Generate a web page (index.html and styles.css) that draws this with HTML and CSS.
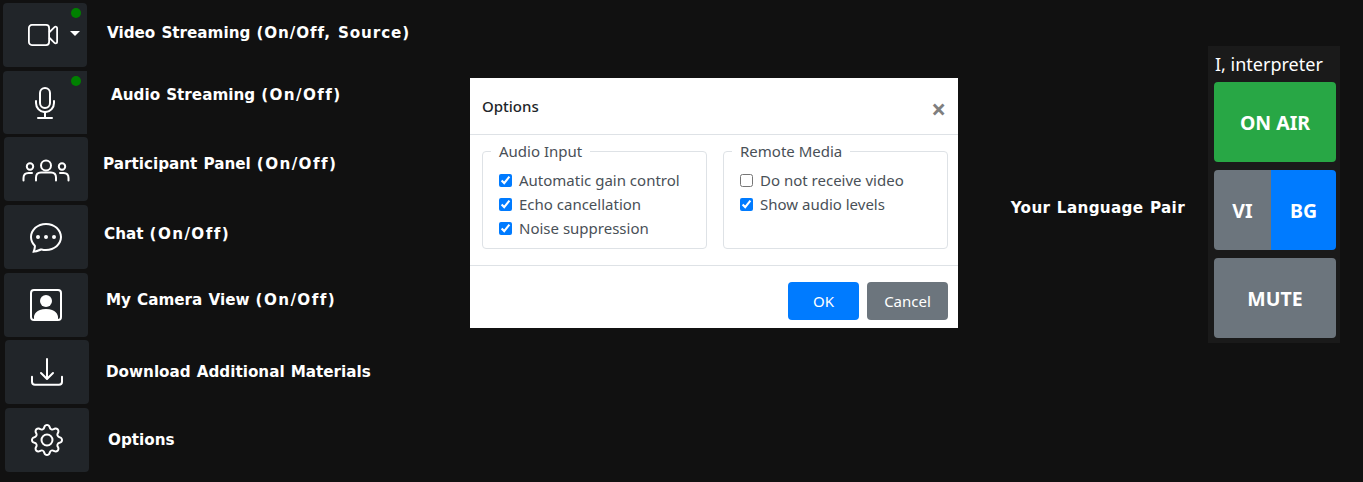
FILE: index.html
```html
<!DOCTYPE html>
<html>
	<head>
		<meta charset="utf-8"/>
		<title>Interpreter</title>
		<link rel="stylesheet" href="styles.css">
	</head>
	<body>
		<div class="toolbar">
			<div class="row row1">
				<div class="tool">
					<svg class="icon-cam" viewBox="0 0 30 22" fill="none" stroke="#fff" stroke-width="1.8"><rect x="0.9" y="0.9" width="20.2" height="20.2" rx="3"/><path d="M21.100 8.500l5.400-5.300c1-.9 2.600-.5 2.600.9v13.800c0 1.400-1.600 1.800-2.600.9l-5.400-5.300"/></svg>
					<span class="caret"></span>
					<span class="dot"></span>
				</div>
				<span class="label">Video Streaming <span class="paren-long">(On/Off, Source)</span></span>
			</div>
			<div class="row row2">
				<div class="tool square-right">
					<svg class="icon" viewBox="0 0 16 16" fill="#fff"><path d="M3.5 6.5A.5.5 0 0 1 4 7v1a4 4 0 0 0 8 0V7a.5.5 0 0 1 1 0v1a5 5 0 0 1-4.5 4.975V15h3a.5.5 0 0 1 0 1h-7a.5.5 0 0 1 0-1h3v-2.025A5 5 0 0 1 3 8V7a.5.5 0 0 1 .5-.5z"/><path d="M10 8a2 2 0 1 1-4 0V3a2 2 0 1 1 4 0v5zM8 0a3 3 0 0 0-3 3v5a3 3 0 0 0 6 0V3a3 3 0 0 0-3-3z"/></svg>
					<span class="dot"></span>
				</div>
				<span class="label">Audio Streaming <span class="paren">(On/Off)</span></span>
			</div>
			<div class="row row3">
				<div class="tool">
					<svg class="icon-people" viewBox="0 0 48 24" fill="none" stroke="#fff" stroke-width="2" stroke-linecap="round"><circle cx="24" cy="7.500" r="5"/><circle cx="8" cy="8.500" r="3.200"/><circle cx="40" cy="8.500" r="3.200"/><path d="M14 22.500v-3c0-3 2-5 5-5h10c3 0 5 2 5 5v3"/><path d="M1.500 22.500v-2.500c0-3 2-5 5-5h3.500"/><path d="M46.500 22.500v-2.500c0-3-2-5-5-5h-3.500"/></svg>
				</div>
				<span class="label">Participant Panel <span class="paren">(On/Off)</span></span>
			</div>
			<div class="row row4">
				<div class="tool">
					<svg class="icon" viewBox="0 0 16 16" fill="#fff"><path d="M5 8a1 1 0 1 1-2 0 1 1 0 0 1 2 0zm4 0a1 1 0 1 1-2 0 1 1 0 0 1 2 0zm3 1a1 1 0 1 0 0-2 1 1 0 0 0 0 2z"/><path d="m2.165 15.803.02-.004c1.83-.363 2.948-.842 3.468-1.105A9.06 9.06 0 0 0 8 15c4.418 0 8-3.134 8-7s-3.582-7-8-7-8 3.134-8 7c0 1.760.743 3.370 1.970 4.600a10.437 10.437 0 0 1-.524 2.318l-.003.011a10.722 10.722 0 0 1-.244.637c-.079.186.074.394.273.362a21.673 21.673 0 0 0 .693-.125zm.8-3.108a1 1 0 0 0-.287-.801C1.618 10.830 1 9.468 1 8c0-3.192 3.004-6 7-6s7 2.808 7 6c0 3.193-3.004 6-7 6a8.060 8.060 0 0 1-2.088-.272 1 1 0 0 0-.711.074c-.387.196-1.240.570-2.634.893a10.970 10.970 0 0 0 .398-2z"/></svg>
				</div>
				<span class="label">Chat <span class="paren">(On/Off)</span></span>
			</div>
			<div class="row row5">
				<div class="tool">
					<svg class="icon" viewBox="0 0 16 16" fill="#fff"><path d="M11 6a3 3 0 1 1-6 0 3 3 0 0 1 6 0z"/><path d="M2 0a2 2 0 0 0-2 2v12a2 2 0 0 0 2 2h12a2 2 0 0 0 2-2V2a2 2 0 0 0-2-2H2zm12 1a1 1 0 0 1 1 1v12a1 1 0 0 1-1 1v-1c0-1-1-4-6-4s-6 3-6 4v1a1 1 0 0 1-1-1V2a1 1 0 0 1 1-1h12z"/></svg>
				</div>
				<span class="label">My Camera View <span class="paren">(On/Off)</span></span>
			</div>
			<div class="row row6">
				<div class="tool">
					<svg class="icon" viewBox="0 0 16 16" fill="#fff"><path d="M.5 9.900a.5.5 0 0 1 .5.500v2.500a1 1 0 0 0 1 1h12a1 1 0 0 0 1-1v-2.500a.5.5 0 0 1 1 0v2.500a2 2 0 0 1-2 2H2a2 2 0 0 1-2-2v-2.500a.5.5 0 0 1 .5-.500z"/><path d="M7.646 11.854a.5.5 0 0 0 .708 0l3-3a.5.5 0 0 0-.708-.708L8.500 10.293V1.500a.5.5 0 0 0-1 0v8.793L5.354 8.146a.5.5 0 1 0-.708.708l3 3z"/></svg>
				</div>
				<span class="label">Download Additional Materials</span>
			</div>
			<div class="row row7">
				<div class="tool">
					<svg class="icon" viewBox="0 0 16 16" fill="#fff"><path d="M8 4.754a3.246 3.246 0 1 0 0 6.492 3.246 3.246 0 0 0 0-6.492zM5.754 8a2.246 2.246 0 1 1 4.492 0 2.246 2.246 0 0 1-4.492 0z"/><path d="M9.796 1.343c-.527-1.790-3.065-1.790-3.592 0l-.094.319a.873.873 0 0 1-1.255.520l-.292-.160c-1.640-.892-3.433.902-2.540 2.541l.159.292a.873.873 0 0 1-.520 1.255l-.319.094c-1.790.527-1.790 3.065 0 3.592l.319.094a.873.873 0 0 1 .520 1.255l-.160.292c-.892 1.640.901 3.434 2.541 2.540l.292-.159a.873.873 0 0 1 1.255.520l.094.319c.527 1.790 3.065 1.790 3.592 0l.094-.319a.873.873 0 0 1 1.255-.520l.292.160c1.640.893 3.434-.902 2.540-2.541l-.159-.292a.873.873 0 0 1 .520-1.255l.319-.094c1.790-.527 1.790-3.065 0-3.592l-.319-.094a.873.873 0 0 1-.520-1.255l.160-.292c.893-1.640-.902-3.433-2.541-2.540l-.292.159a.873.873 0 0 1-1.255-.520l-.094-.319zm-2.633.283c.246-.835 1.428-.835 1.674 0l.094.319a1.873 1.873 0 0 0 2.693 1.115l.291-.160c.764-.415 1.600.420 1.184 1.185l-.159.292a1.873 1.873 0 0 0 1.116 2.692l.318.094c.835.246.835 1.428 0 1.674l-.319.094a1.873 1.873 0 0 0-1.115 2.693l.160.291c.415.764-.420 1.600-1.185 1.184l-.291-.159a1.873 1.873 0 0 0-2.693 1.116l-.094.318c-.246.835-1.428.835-1.674 0l-.094-.319a1.873 1.873 0 0 0-2.692-1.115l-.292.160c-.764.415-1.600-.420-1.184-1.185l.159-.291A1.873 1.873 0 0 0 1.945 8.930l-.319-.094c-.835-.246-.835-1.428 0-1.674l.319-.094A1.873 1.873 0 0 0 3.060 4.377l-.160-.292c-.415-.764.420-1.600 1.185-1.184l.292.159a1.873 1.873 0 0 0 2.692-1.115l.094-.319z"/></svg>
				</div>
				<span class="label">Options</span>
			</div>
		</div>

		<div class="lang-area">
			<span class="label lang-label">Your Language Pair</span>
			<div class="panel">
				<div class="panel-title">I, interpreter</div>
				<div class="big-btn green">ON AIR</div>
				<div class="pair">
					<div class="big-btn gray vi">VI</div>
					<div class="big-btn blue bg">BG</div>
				</div>
				<div class="big-btn gray">MUTE</div>
			</div>
		</div>

		<div class="modal">
			<div class="modal-header">
				<h5>Options</h5>
				<span class="close">×</span>
			</div>
			<div class="modal-body">
				<fieldset>
					<legend>Audio Input</legend>
					<label><input type="checkbox" checked> Automatic gain control</label>
					<label><input type="checkbox" checked> Echo cancellation</label>
					<label><input type="checkbox" checked> Noise suppression</label>
				</fieldset>
				<fieldset>
					<legend>Remote Media</legend>
					<label><input type="checkbox"> Do not receive video</label>
					<label><input type="checkbox" checked> Show audio levels</label>
				</fieldset>
			</div>
			<div class="modal-footer">
				<button class="btn blue ok">OK</button>
				<button class="btn gray cancel">Cancel</button>
			</div>
		</div>
	</body>
</html>
```

FILE: styles.css
```css
* {
	margin: 0;
	padding: 0;
	box-sizing: border-box;
}

body {
	width: 1363px;
	height: 482px;
	background-color: #111;
	overflow: hidden;
	display: flex;
	font-family: "Noto Sans", sans-serif;
	color: #fff;
}

/* left column */
.toolbar {
	padding-top: 3px;
	width: 500px;
}

.row {
	display: flex;
	align-items: flex-start;
	margin-bottom: 4px;
}

.tool {
	width: 84px;
	height: 64px;
	flex: none;
	background-color: #212529;
	border-radius: 4px;
	position: relative;
	display: flex;
	align-items: center;
	justify-content: center;
}

.square-right {
	border-radius: 4px 0 0 4px;
	height: 63px;
}

.label {
	font-family: "DejaVu Sans", sans-serif;
	font-weight: bold;
	font-size: 15.2px;
	line-height: 20px;
	word-spacing: .8px;
	white-space: nowrap;
}

.paren {
	letter-spacing: 1.4px;
}

.paren-long {
	letter-spacing: .9px;
}

.row1 { padding-left: 3px; }
.row2 { padding-left: 3px; margin-bottom: 3px; }
.row3 { padding-left: 4px; }
.row4 { padding-left: 4px; }
.row5 { padding-left: 4px; margin-bottom: 3px; }
.row6 { padding-left: 5px; }
.row7 { padding-left: 5px; }

.row1 .label { margin: 20px 0 0 20px; }
.row2 .label { margin: 14px 0 0 24px; }
.row3 .label { margin: 17px 0 0 15px; }
.row4 .label { margin: 19px 0 0 16px; }
.row5 .label { margin: 17px 0 0 18px; }
.row6 .label { margin: 22px 0 0 17px; }
.row7 .label { margin: 22px 0 0 19px; }

.icon {
	width: 32px;
	height: 32px;
}

.icon-cam {
	width: 30px;
	height: 22px;
	margin-right: 4px;
}

.icon-people {
	width: 48px;
	height: 24px;
	margin-top: 1px;
}

.caret {
	position: absolute;
	left: 67px;
	top: 28px;
	border-top: 5px solid #fff;
	border-left: 5px solid transparent;
	border-right: 5px solid transparent;
}

.dot {
	position: absolute;
	left: 68px;
	top: 5px;
	width: 10px;
	height: 10px;
	border-radius: 50%;
	background-color: green;
}

/* right side */
.lang-area {
	margin-left: auto;
	padding: 46px 23px 0 0;
	display: flex;
	align-items: flex-start;
}

.lang-label {
	margin: 152px 23px 0 0;
	letter-spacing: .35px;
}

.panel {
	width: 132px;
	height: 297px;
	background-color: #1a1a1a;
	padding: 0 4px 0 6px;
}

.panel-title {
	font-size: 18px;
	line-height: 36px;
	padding-left: 1px;
}

.big-btn {
	height: 80px;
	margin-bottom: 8px;
	border-radius: 4px;
	display: flex;
	align-items: center;
	justify-content: center;
	padding-top: 1px;
	font-size: 19.5px;
	font-weight: bold;
}

.green { background-color: #28a745; }
.gray { background-color: #6c757d; }
.blue { background-color: #007bff; }

.pair {
	display: flex;
}

.vi {
	width: 57px;
	border-radius: 4px 0 0 4px;
}

.bg {
	width: 65px;
	border-radius: 0 4px 4px 0;
}

/* dialog */
.modal {
	position: absolute;
	left: 470px;
	top: 78px;
	width: 488px;
	height: 250px;
	background-color: #fff;
	color: #212529;
}

.modal-header {
	height: 57px;
	padding: 0 12px;
	display: flex;
	align-items: center;
	justify-content: space-between;
	border-bottom: 1px solid #dee2e6;
}

h5 {
	font-size: 15px;
	font-weight: 500;
}

.close {
	font-size: 26px;
	line-height: 30px;
	font-weight: bold;
	color: #7f7f7f;
	margin: 6px 0 0 0;
}

.modal-body {
	height: 131px;
	padding: 4px 10px 0 12px;
	display: flex;
	gap: 16px;
	border-bottom: 1px solid #dee2e6;
}

fieldset {
	width: 225px;
	height: 110px;
	border: 1px solid #dee2e6;
	border-radius: 4px;
	padding: 5px 16px 0;
}

legend {
	font-size: 15px;
	line-height: 24px;
	padding: 0 8px;
	margin-left: -8px;
	color: #495057;
}

fieldset label {
	display: flex;
	align-items: center;
	height: 24px;
	font-size: 15px;
	color: #495057;
	white-space: nowrap;
}

input {
	width: 13px;
	height: 13px;
	margin-right: 7px;
	accent-color: #007bff;
}

.modal-footer {
	padding: 16px 10px 0 0;
	display: flex;
	justify-content: flex-end;
	gap: 8px;
}

.btn {
	height: 38px;
	border: none;
	border-radius: 4px;
	color: #fff;
	font-family: inherit;
	font-size: 15px;
}

.ok { width: 71px; }
.cancel { width: 81px; }
```
